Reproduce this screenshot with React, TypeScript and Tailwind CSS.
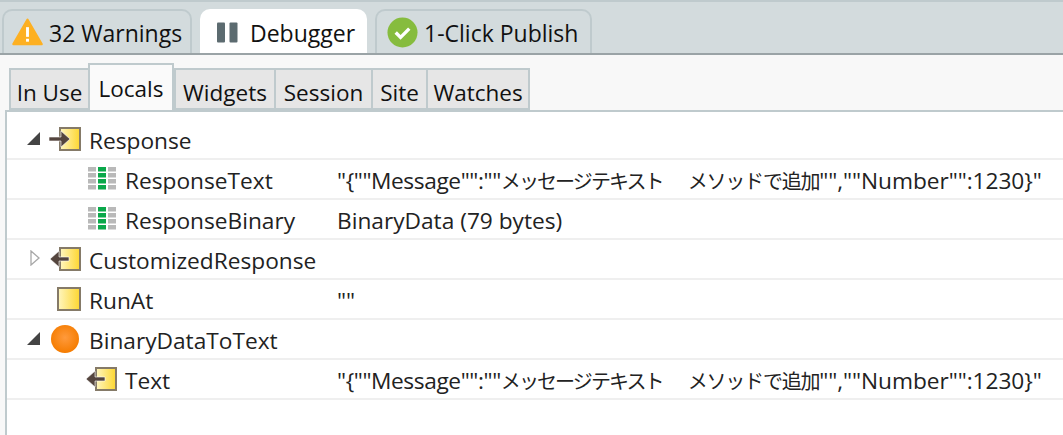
import { ReactNode } from "react";

const FONT = "font-['Open_Sans','Noto_Sans_CJK_JP',sans-serif]";

const rows = [
  { depth: 0, arrow: "open", icon: "in", name: "Response", value: "" },
  { depth: 1, arrow: "", icon: "grid", name: "ResponseText", value: "msg" },
  { depth: 1, arrow: "", icon: "grid", name: "ResponseBinary", value: "BinaryData (79 bytes)" },
  { depth: 0, arrow: "closed", icon: "out", name: "CustomizedResponse", value: "" },
  { depth: 0, arrow: "", icon: "box", name: "RunAt", value: '""' },
  { depth: 0, arrow: "open", icon: "ball", name: "BinaryDataToText", value: "" },
  { depth: 1, arrow: "", icon: "out", name: "Text", value: "msg" },
];

const iconPad: Record<string, string> = {
  in: "pl-[9px]",
  out: "pl-[9px]",
  box: "pl-[17px]",
  ball: "pl-[10px]",
  grid: "pl-[11px]",
};

// the japanese glyphs are much narrower than the latin ones in the reference
const Message = () => (
  <>
    <span className="tracking-[-0.4px]">{'"{""Message"":""'}</span>
    <span className="text-[20px] tracking-[-1.9px]">メッセージテキスト</span>
    <span className="inline-block w-[25px]" />
    <span className="text-[20px] tracking-[-1.2px]">メソッドで追加</span>
    <span className="tracking-[-0.05px]">{'"",""Number"":1230}"'}</span>
  </>
);

const WarningIcon = () => (
  <svg width="31" height="28" viewBox="0 0 32 28">
    <path d="M16 1.5 L30.5 26.5 H1.5 Z" fill="#fdb022" stroke="#fdb022" strokeWidth="2.5" strokeLinejoin="round" />
    <rect x="14.5" y="9" width="3" height="10" fill="#fff" />
    <rect x="14.5" y="21" width="3" height="3" fill="#fff" />
  </svg>
);

const PauseIcon = () => (
  <svg width="21" height="21" viewBox="0 0 21 21">
    <rect x="0" y="0.5" width="8" height="20" rx="1" fill="#5c6b70" />
    <rect x="12.5" y="0.5" width="8" height="20" rx="1" fill="#5c6b70" />
  </svg>
);

const CheckIcon = () => (
  <svg width="31" height="31" viewBox="0 0 32 32">
    <circle cx="16" cy="16" r="15.5" fill="#86bc3e" />
    <path d="M9 16 L14 21 L23 12" fill="none" stroke="#fff" strokeWidth="3.5" />
  </svg>
);

const Box = ({ x = 0, w = 22 }: { x?: number; w?: number }) => (
  <>
    <defs>
      <linearGradient id="yel" x1="0" x2="1" y1="0" y2="0">
        <stop offset="0" stopColor="#fff6c0" />
        <stop offset="1" stopColor="#fdd62f" />
      </linearGradient>
    </defs>
    <rect x={x + 1} y="1" width={w} height="22" fill="url(#yel)" stroke="#857a68" strokeWidth="2" />
  </>
);

const TreeIcon = ({ kind }: { kind: string }) => {
  if (kind === "grid") {
    return (
      <svg width="30" height="24" viewBox="0 0 30 24">
        {[0, 6, 12, 18].map((y) => (
          <g key={y}>
            <rect x="1" y={y} width="8" height="4.5" fill="#b9b9b9" />
            <rect x="11" y={y} width="8" height="4.5" fill="#0aa84a" />
            <rect x="21" y={y} width="8" height="4.5" fill="#b9b9b9" />
          </g>
        ))}
      </svg>
    );
  }
  if (kind === "ball") {
    return (
      <svg width="30" height="30" viewBox="0 0 30 30">
        <defs>
          <radialGradient id="ball" cx="0.5" cy="0.45" r="0.55">
            <stop offset="0" stopColor="#ff9a3c" />
            <stop offset="1" stopColor="#f57c00" />
          </radialGradient>
        </defs>
        <circle cx="15" cy="15" r="14" fill="url(#ball)" />
      </svg>
    );
  }
  if (kind === "box") {
    return (
      <svg width="24" height="24" viewBox="0 0 24 24">
        <Box />
      </svg>
    );
  }
  const arrow =
    kind === "in"
      ? "M0 10 H12 V4 L21 12 L12 20 V14 H0 Z"
      : "M20 10 H10 V4 L1 12 L10 20 V14 H20 Z";
  return (
    <svg width="32" height="24" viewBox="0 0 32 24">
      <Box x={10} w={20} />
      <path d={arrow} fill="#54453e" stroke="#fff" strokeWidth="0.6" />
    </svg>
  );
};

const Arrow = ({ type }: { type: string }) => {
  if (type === "open") {
    return (
      <svg width="13" height="13" viewBox="0 0 13 13">
        <path d="M0 13 H13 V0 Z" fill="#444" />
      </svg>
    );
  }
  if (type === "closed") {
    return (
      <svg width="10" height="16" viewBox="0 0 10 16">
        <path d="M1 1 L9 8 L1 15 Z" fill="#fff" stroke="#a8a8a8" strokeWidth="1.3" />
      </svg>
    );
  }
  return <span />;
};

const TopTab = ({ className, iconBox, active, icon, label }: { className: string; iconBox: string; active?: boolean; icon: ReactNode; label: string }) => (
  <div
    className={`flex h-[44px] items-center rounded-t-[10px] border-2 border-b-0 ${className} ${
      active ? "border-white bg-white" : "border-[#bfcacd] bg-[#d3dbdd]"
    }`}
  >
    <span className={`flex shrink-0 items-center ${iconBox}`}>{icon}</span>
    <span className="whitespace-nowrap pt-[2px]">{label}</span>
  </div>
);

const SubTab = ({ w, label, active }: { w: string; label: string; active?: boolean }) => (
  <div
    className={`flex items-center justify-center border-2 border-[#bfcacd] ${w} ${
      active
        ? "z-10 h-[47px] border-b-0 bg-[#fafafa] pt-[3px]"
        : "h-[42px] border-r-0 bg-[#e6e6e6] pt-[9px] last:border-r-2"
    }`}
  >
    {label}
  </div>
);

export default function App() {
  return (
    <div className={`h-[435px] w-[1063px] overflow-hidden bg-[#f8f8f8] text-[22.7px] leading-none text-[#111] ${FONT}`}>
      <div className="flex h-[55px] items-end gap-[8px] border-y-2 border-b-[#9aa3a6] border-t-[#bfcacd] bg-[#d3dbdd] pl-[2px] text-[23px]">
        <TopTab className="w-[190px] pl-[8px]" iconBox="w-[37px]" icon={<WarningIcon />} label="32 Warnings" />
        <TopTab className="w-[167px] pl-[15px]" iconBox="w-[33px]" active icon={<PauseIcon />} label="Debugger" />
        <TopTab className="w-[217px] pl-[10px]" iconBox="w-[37px]" icon={<CheckIcon />} label="1-Click Publish" />
      </div>

      <div className="mt-[8px] flex items-end pl-[9px] text-[22.5px]">
        <SubTab w="w-[79px]" label="In Use" />
        <SubTab w="w-[86px]" label="Locals" active />
        <SubTab w="w-[100px]" label="Widgets" />
        <SubTab w="w-[97px]" label="Session" />
        <SubTab w="w-[55px]" label="Site" />
        <SubTab w="w-[104px]" label="Watches" />
      </div>

      <div className="ml-[5px] h-[325px] border-l-2 border-t-2 border-[#bfcacd] bg-white pt-[8px] text-[#222]">
        {rows.map((row) => (
          <div key={row.name} className="flex h-[40px] items-center border-b-2 border-[#efefef]">
            <div className="flex w-[330px] shrink-0 items-center">
              <span className="flex w-[33px] shrink-0 justify-end pb-[2px]">
                {row.arrow && <Arrow type={row.arrow} />}
              </span>
              <span className={`flex h-[30px] w-[49px] shrink-0 items-center ${iconPad[row.icon]} ${row.depth ? "ml-[36px]" : ""}`}>
                <TreeIcon kind={row.icon} />
              </span>
              <span className="whitespace-nowrap pt-[5px]">{row.name}</span>
            </div>
            <span className="whitespace-nowrap pt-[5px]">{row.value === "msg" ? <Message /> : row.value}</span>
          </div>
        ))}
      </div>
    </div>
  );
}
